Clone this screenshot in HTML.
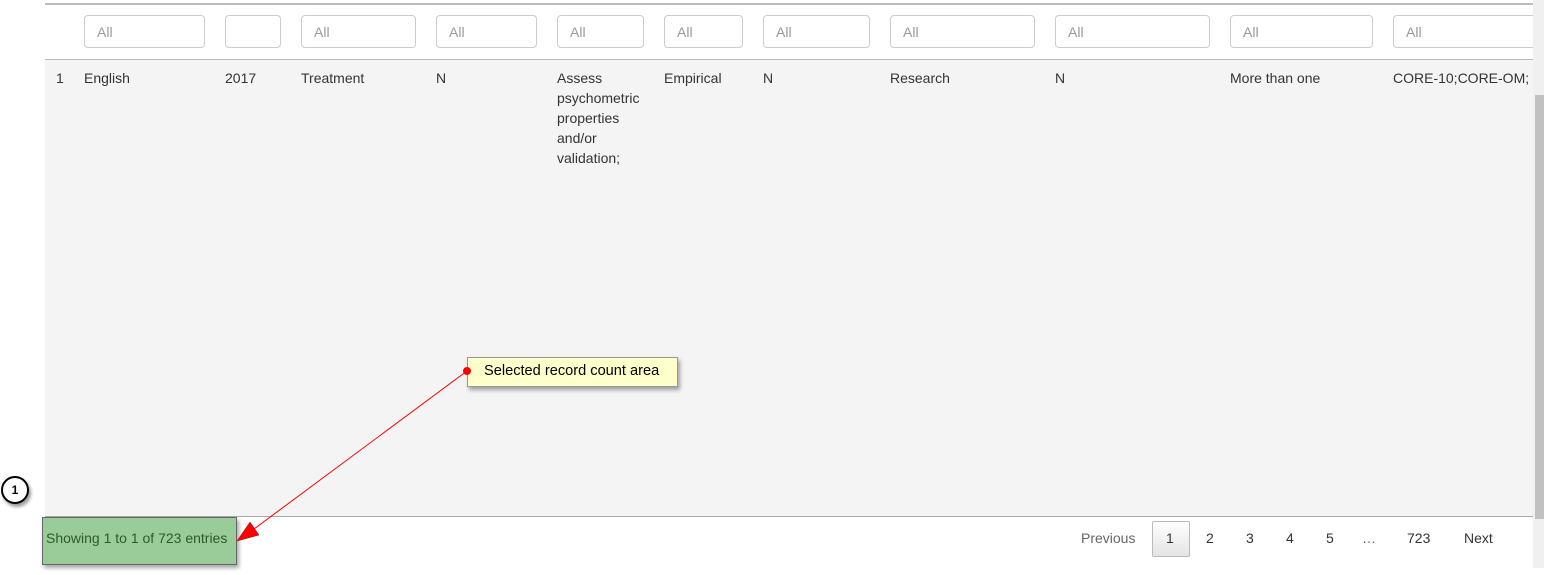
<!DOCTYPE html>
<html><head><meta charset="utf-8"><style>
body{margin:0;width:1544px;height:575px;background:#fff;position:relative;overflow:hidden;font-family:"Liberation Sans",Arial,sans-serif;font-size:14px;color:#333}
.a{position:absolute}
.inp{position:absolute;top:15px;height:31px;border:1px solid #ccc;border-radius:4px;background:#fff;color:#999;box-sizing:content-box}
.inp span{position:absolute;left:12px;top:8px}
.t{position:absolute;top:68px;line-height:20px}
.pg{position:absolute;top:530px;color:#333}
</style></head><body>
<div class="a" style="left:45px;top:3px;width:1488px;height:2px;background:#bbb"></div>
<div class="a" style="left:45px;top:59px;width:1488px;height:1px;background:#bbb"></div>
<div class="a" style="left:45px;top:60px;width:1488px;height:456px;background:#f4f4f4"></div>
<div class="a" style="left:45px;top:516px;width:1488px;height:1px;background:#aaa"></div>
<div class="a" style="left:1533px;top:0;width:11px;height:568px;background:#f0f0f0"></div>
<div class="a" style="left:1535px;top:95px;width:9px;height:424px;background:#c1c1c1"></div>

<div class="inp" style="left:84px;width:119px"><span>All</span></div>
<div class="inp" style="left:225px;width:54px"></div>
<div class="inp" style="left:301px;width:113px"><span>All</span></div>
<div class="inp" style="left:436px;width:99px"><span>All</span></div>
<div class="inp" style="left:557px;width:85px"><span>All</span></div>
<div class="inp" style="left:664px;width:77px"><span>All</span></div>
<div class="inp" style="left:763px;width:105px"><span>All</span></div>
<div class="inp" style="left:890px;width:143px"><span>All</span></div>
<div class="inp" style="left:1055px;width:153px"><span>All</span></div>
<div class="inp" style="left:1230px;width:141px"><span>All</span></div>
<div class="inp" style="left:1393px;width:150px;border-right:none"><span>All</span></div>
<div class="a" style="left:1533px;top:0;width:11px;height:95px;background:#f0f0f0"></div>

<div class="t" style="left:56px">1</div>
<div class="t" style="left:84px">English</div>
<div class="t" style="left:225px">2017</div>
<div class="t" style="left:301px">Treatment</div>
<div class="t" style="left:436px">N</div>
<div class="t" style="left:557px;width:90px">Assess<br>psychometric<br>properties<br>and/or<br>validation;</div>
<div class="t" style="left:664px">Empirical</div>
<div class="t" style="left:763px">N</div>
<div class="t" style="left:890px">Research</div>
<div class="t" style="left:1055px">N</div>
<div class="t" style="left:1230px">More than one</div>
<div class="t" style="left:1393px">CORE-10;CORE-OM;</div>

<div class="pg" style="left:1081px;color:#666">Previous</div>
<div class="a" style="left:1152px;top:521px;width:36px;height:34px;border:1px solid #bbb;border-radius:2px;background:linear-gradient(#fff,#e4e4e4)"></div>
<div class="pg" style="left:1166px">1</div>
<div class="pg" style="left:1206px">2</div>
<div class="pg" style="left:1246px">3</div>
<div class="pg" style="left:1286px">4</div>
<div class="pg" style="left:1326px">5</div>
<div class="pg" style="left:1362px;color:#666">…</div>
<div class="pg" style="left:1407px">723</div>
<div class="pg" style="left:1464px">Next</div>

<div class="a" style="left:42px;top:517px;width:193px;height:46px;background:#99cc99;border:1px solid #666;box-shadow:2px 3px 4px rgba(0,0,0,.35)"></div>
<div class="a" style="left:46px;top:530px;color:#2d5a2d">Showing 1 to 1 of 723 entries</div>

<div class="a" style="left:467px;top:357px;width:209px;height:28px;background:#ffffcc;border:1px solid #999;box-shadow:2px 3px 4px rgba(0,0,0,.35)"></div>
<div class="a" style="left:484px;top:363px;color:#000;font-size:14.6px">Selected record count area</div>

<div class="a" style="left:1px;top:476px;width:28px;height:28px;border:2px solid #000;border-radius:50%;background:#fff;box-sizing:border-box;box-shadow:2px 3px 3px rgba(0,0,0,.4);text-align:center;line-height:24px;font-size:12px;font-weight:bold;color:#000">1</div>

<svg class="a" style="left:0;top:0" width="1544" height="575">
<line x1="467" y1="371" x2="250" y2="532" stroke="#f00" stroke-width="1"/>
<polygon points="237,541 250,522 259,535" fill="#f00" stroke="#900" stroke-width="0.5"/>
<circle cx="467" cy="371" r="4" fill="#f00"/>
</svg>
</body></html>
